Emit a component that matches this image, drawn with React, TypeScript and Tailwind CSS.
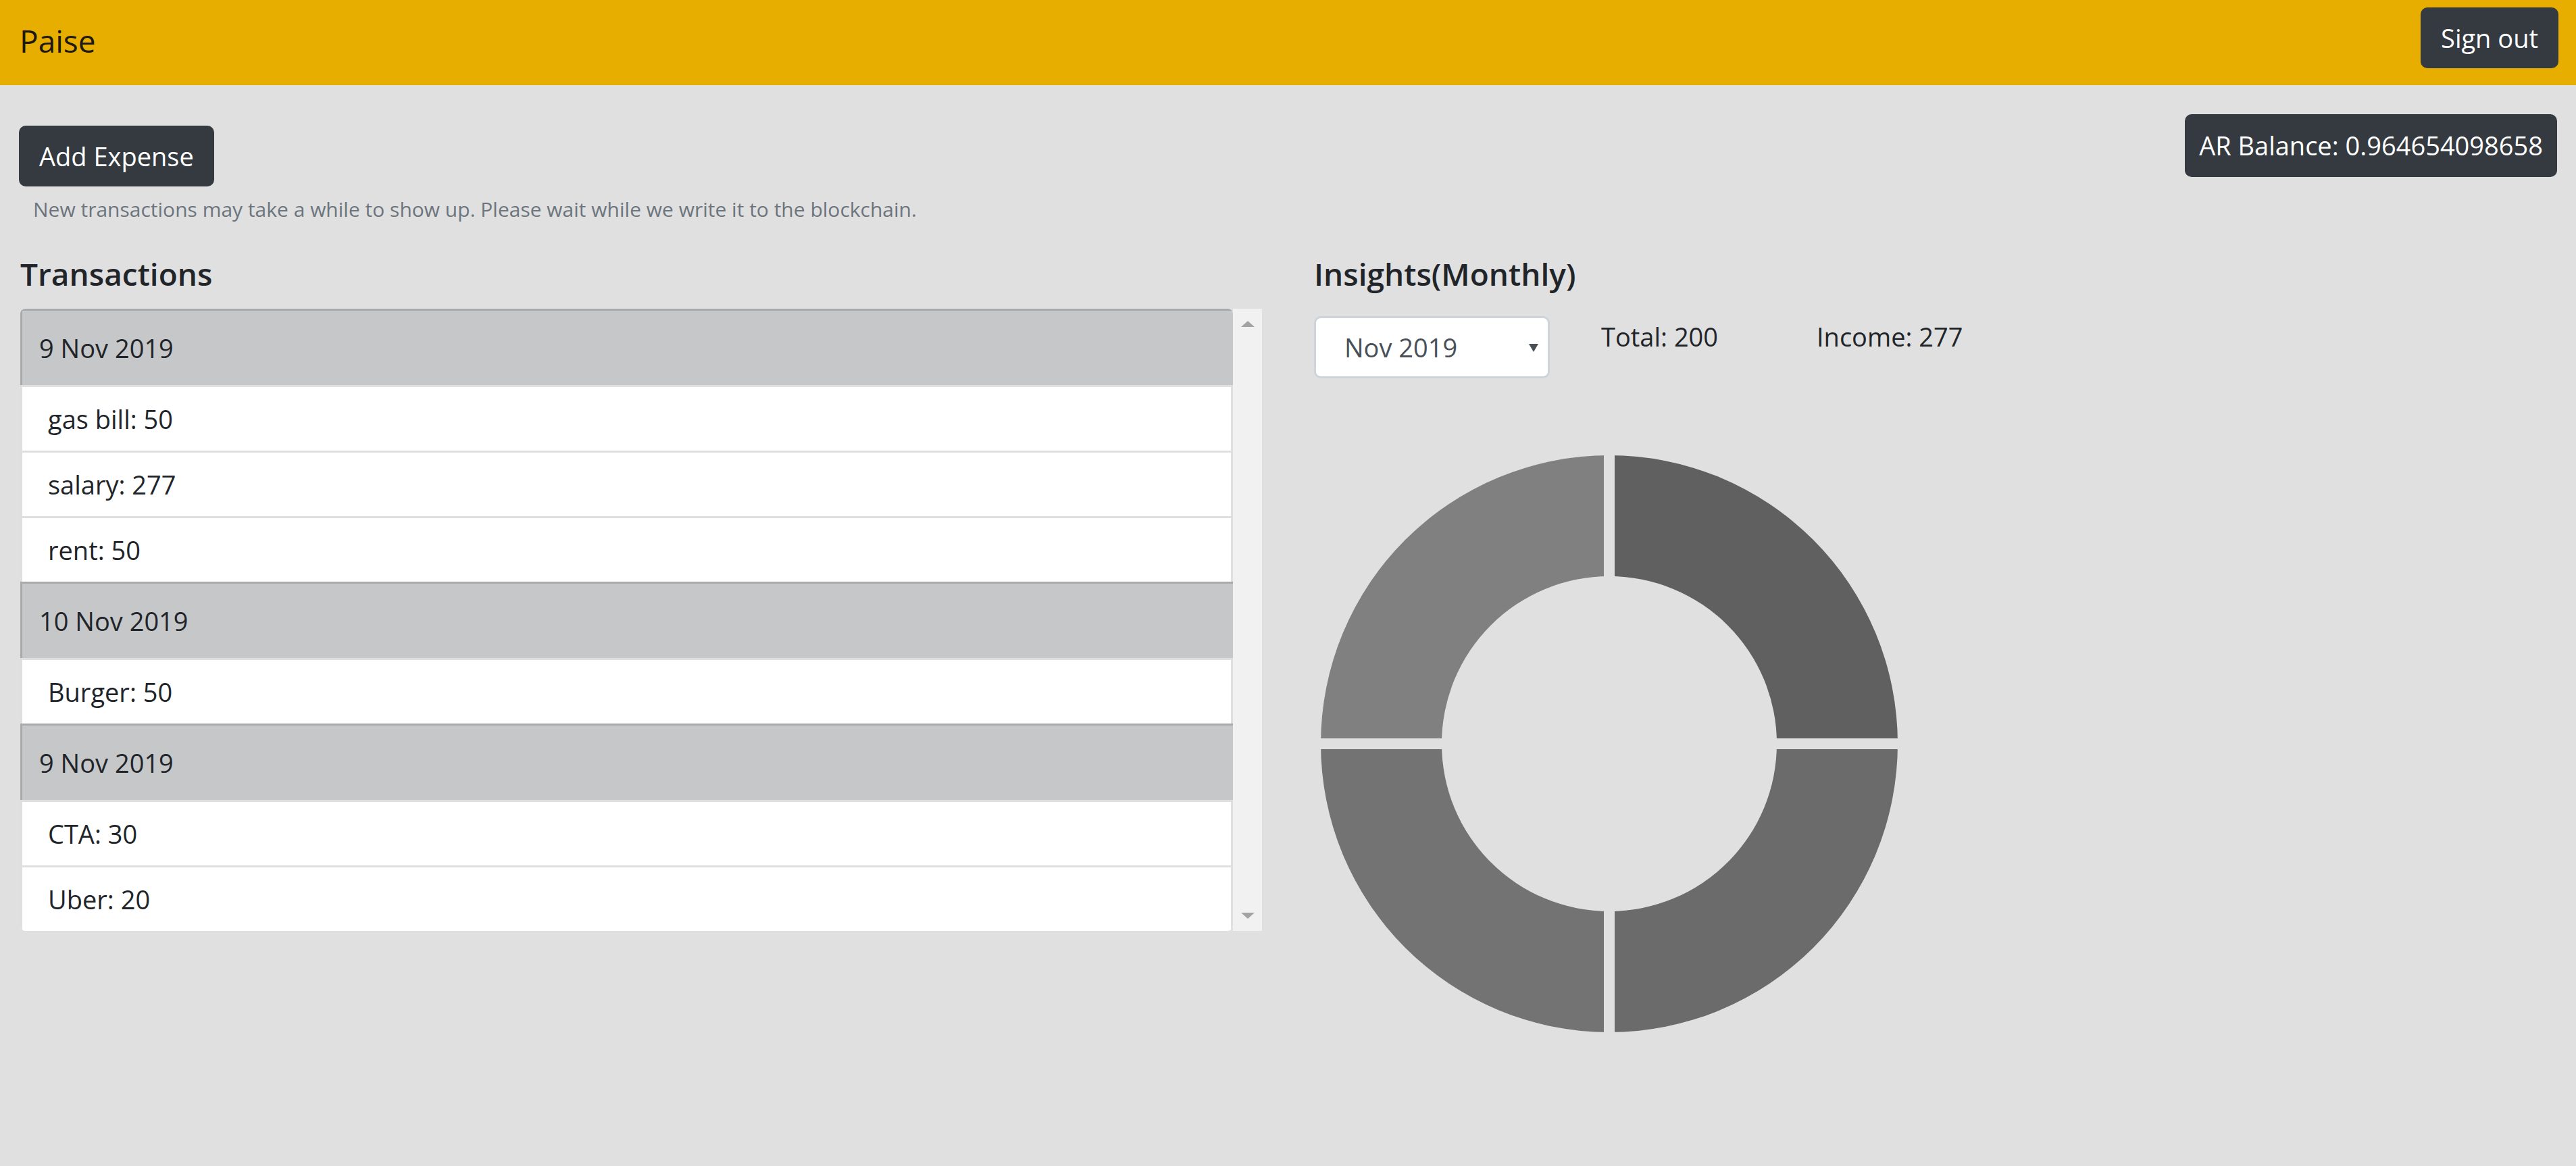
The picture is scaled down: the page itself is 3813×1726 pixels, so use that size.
import React from "react";

type Row = { kind: "date" | "item"; label: string };

const rows: Row[] = [
  { kind: "date", label: "9 Nov 2019" },
  { kind: "item", label: "gas bill: 50" },
  { kind: "item", label: "salary: 277" },
  { kind: "item", label: "rent: 50" },
  { kind: "date", label: "10 Nov 2019" },
  { kind: "item", label: "Burger: 50" },
  { kind: "date", label: "9 Nov 2019" },
  { kind: "item", label: "CTA: 30" },
  { kind: "item", label: "Uber: 20" },
];

// quarter slices of the monthly doughnut, clockwise from 12 o'clock
const slices = [
  { from: -90, to: 0, color: "#606060" },
  { from: 0, to: 90, color: "#6b6b6b" },
  { from: 90, to: 180, color: "#737373" },
  { from: 180, to: 270, color: "#808080" },
];

function arc(from: number, to: number, R: number, r: number, c: number) {
  const rad = (d: number) => (d * Math.PI) / 180;
  const p = (rr: number, d: number) => `${c + rr * Math.cos(rad(d))} ${c + rr * Math.sin(rad(d))}`;
  return `M ${p(R, from)} A ${R} ${R} 0 0 1 ${p(R, to)} L ${p(r, to)} A ${r} ${r} 0 0 0 ${p(r, from)} Z`;
}

function Doughnut() {
  const size = 854;
  const c = size / 2;
  return (
    <svg width={size} height={size} viewBox={`0 0 ${size} ${size}`}>
      {slices.map((s) => (
        <path key={s.from} d={arc(s.from, s.to, c, 248, c)} fill={s.color} />
      ))}
      <rect x={c - 8} y={0} width={16} height={size} fill="#e0e0e0" />
      <rect x={0} y={c - 8} width={size} height={16} fill="#e0e0e0" />
    </svg>
  );
}

function TransactionList() {
  return (
    <div className="flex">
      <div className="flex-1 flex flex-col rounded-[8px] overflow-hidden">
        {rows.map((row, i) =>
          row.kind === "date" ? (
            <div
              key={i}
              className="h-[113px] flex items-center pl-[25px] bg-[#c6c7c9] border-l-[3px] border-t-[3px] border-[#a9aaac] text-[38px] text-[#212529]"
            >
              {row.label}
            </div>
          ) : (
            <div
              key={i}
              className="h-[97px] flex items-center pl-[38px] bg-white border-l-[3px] border-r-[3px] border-t-[3px] border-[#dfdfdf] text-[38px] text-[#212529]"
            >
              {row.label}
            </div>
          )
        )}
      </div>
      <div className="w-[43px] bg-[#f1f1f1] flex flex-col items-center justify-between py-[18px]">
        <svg width="20" height="9" viewBox="0 0 20 9">
          <polygon points="10,0 20,9 0,9" fill="#a3a3a3" />
        </svg>
        <svg width="20" height="9" viewBox="0 0 20 9">
          <polygon points="0,0 20,0 10,9" fill="#a3a3a3" />
        </svg>
      </div>
    </div>
  );
}

export default function App() {
  return (
    <div className="min-h-screen bg-[#e0e0e0] font-['Open_Sans',sans-serif] text-[#212529]">
      <nav className="h-[126px] bg-[#e7ae00] flex items-center justify-between pl-[29px] pr-[26px]">
        <span className="mb-[6px] text-[46px] text-[#1c1a12]">Paise</span>
        <button className="self-start mt-[11px] h-[90px] px-[30px] rounded-[10px] bg-[#343a40] text-white text-[38px]">
          Sign out
        </button>
      </nav>

      <div className="px-[28px]">
        <div className="flex items-start justify-between pt-[43px]">
          <button className="mt-[17px] h-[90px] px-[30px] rounded-[10px] bg-[#343a40] text-white text-[38px]">
            Add Expense
          </button>
          <div className="h-[93px] px-[21px] flex items-center rounded-[10px] bg-[#343a40] text-white text-[38px]">
            AR Balance: 0.964654098658
          </div>
        </div>
        <p className="mt-[10px] pl-[21px] text-[30px] leading-[48px] text-[#6c757d]">
          New transactions may take a while to show up. Please wait while we write it to the blockchain.
        </p>

        <div className="grid grid-cols-[1838px_1fr] gap-[77px] mt-[42px] pl-[2px]">
          <section>
            <h4 className="text-[46px] font-semibold leading-[58px] mb-[23px]">Transactions</h4>
            <TransactionList />
          </section>

          <section>
            <h4 className="text-[46px] font-semibold leading-[58px] mb-[34px]">Insights(Monthly)</h4>
            <div className="flex items-start">
              <div className="w-[349px] h-[92px] flex items-center justify-between pl-[42px] pr-[14px] bg-white border-[3px] border-[#ced4da] rounded-[10px] text-[38px] text-[#495057]">
                <span>Nov 2019</span>
                <svg width="14" height="14" viewBox="0 0 14 14">
                  <polygon points="0,2 14,2 7,14" fill="#495057" />
                </svg>
              </div>
              <div className="ml-[76px] w-[319px] text-[38px] leading-[60px]">Total: 200</div>
              <div className="text-[38px] leading-[60px]">Income: 277</div>
            </div>
            <div className="mt-[114px] ml-[10px]">
              <Doughnut />
            </div>
          </section>
        </div>
      </div>
    </div>
  );
}
